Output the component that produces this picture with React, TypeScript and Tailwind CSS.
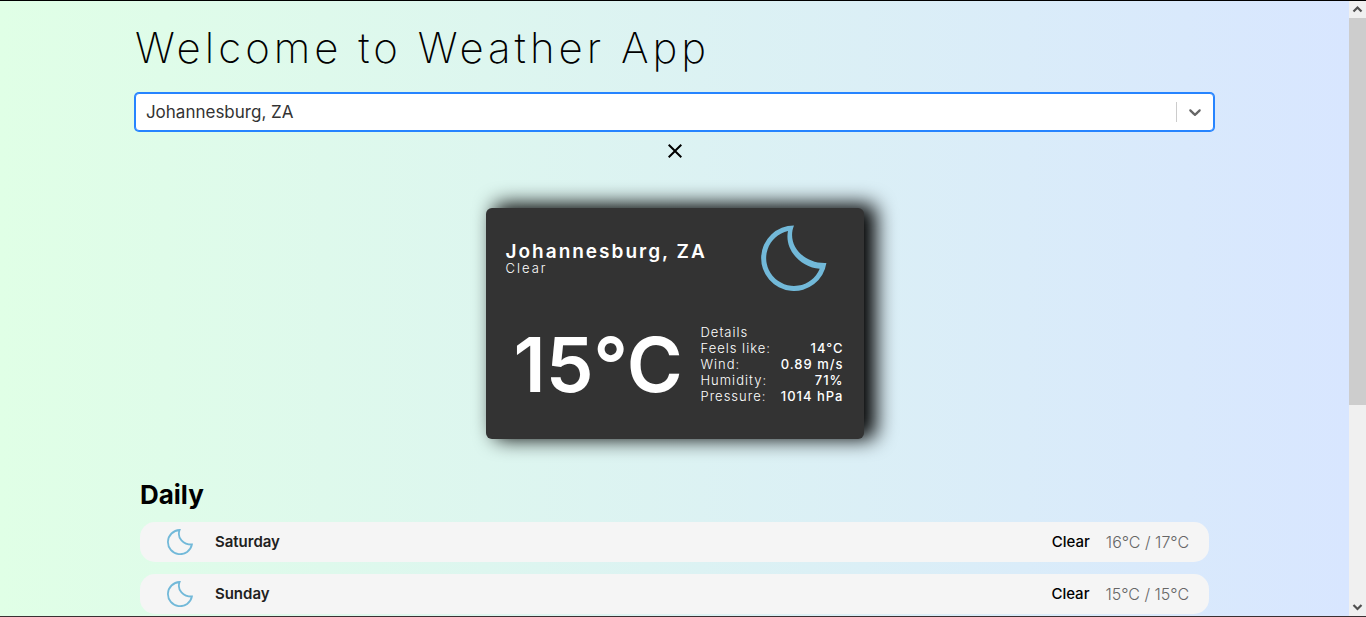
import { useState } from "react";
import { MdClose } from "react-icons/md";

const city = "Johannesburg, ZA";

const details = [
  { label: "Feels like:", value: "14°C" },
  { label: "Wind:", value: "0.89 m/s" },
  { label: "Humidity:", value: "71%" },
  { label: "Pressure:", value: "1014 hPa" },
];

const days = [
  { name: "Saturday", sky: "Clear", range: "16°C / 17°C" },
  { name: "Sunday", sky: "Clear", range: "15°C / 15°C" },
];

function MoonLarge() {
  return (
    <svg viewBox="0 0 66 66" className="size-[66px]" role="img" aria-label="Clear night">
      <path
        fill="#72b9d9"
        fillRule="evenodd"
        d="M33 .4A32.8 32.8 0 1 0 65.4 38C43 39 25 20 33 .4ZM27 6A27.8 27.8 0 1 0 58.7 43.7C40.5 43 23 25 27 6Z"
      />
    </svg>
  );
}

function MoonSmall() {
  return (
    <svg viewBox="0 0 26 26" className="size-[26px]" aria-hidden="true">
      <path
        fill="none"
        stroke="#72b9d9"
        strokeWidth="1.8"
        d="M12.6 1A12.1 12.1 0 1 0 24.9 15.5C16.5 15.6 9.6 9 12.6 1Z"
      />
    </svg>
  );
}

function CityPicker() {
  const [value, setValue] = useState(city);
  return (
    <div className="grid h-[38px] items-center rounded-sm border border-[#2684ff] bg-white ring-1 ring-[#2684ff]">
      <select
        aria-label="City"
        value={value}
        onChange={(e) => setValue(e.target.value)}
        className="col-start-1 row-start-1 h-full w-full appearance-none bg-transparent px-[10px] pt-[2px] text-[17px] text-[#333333] outline-none"
      >
        <option>{city}</option>
      </select>
      <div className="pointer-events-none col-start-1 row-start-1 flex items-center justify-self-end">
        <span className="h-5 w-px bg-[#cccccc]" />
        <svg viewBox="0 0 20 20" className="mx-2 size-5" fill="#666666" aria-hidden="true">
          <path d="M4.516 7.548c0.436-0.446 1.043-0.481 1.576 0l3.908 3.747 3.908-3.747c0.533-0.481 1.141-0.446 1.574 0 0.436 0.445 0.408 1.197 0 1.615-0.406 0.418-4.695 4.502-4.695 4.502-0.217 0.223-0.502 0.335-0.787 0.335s-0.57-0.112-0.789-0.335c0 0-4.287-4.084-4.695-4.502s-0.436-1.17 0-1.615z" />
        </svg>
      </div>
    </div>
  );
}

function CurrentWeather() {
  return (
    <section className="mx-auto w-[378px] rounded-md bg-[#333333] px-5 pt-[17px] pb-[35px] text-white shadow-[10px_-2px_20px_2px_#000000]">
      <div className="flex items-center justify-between pr-[17px]">
        <div>
          <h2 className="text-[19px] leading-5 font-semibold tracking-[2px]">{city}</h2>
          <p className="text-[13px] leading-3 font-light tracking-[2px]">Clear</p>
        </div>
        <MoonLarge />
      </div>
      <div className="mt-[33px] flex items-center justify-between">
        <p className="pl-2 text-[76px] leading-[80px] font-semibold">15°C</p>
        <dl className="w-[143px] text-[13px] leading-4 tracking-[1px]">
          <div className="font-light">Details</div>
          {details.map((d) => (
            <div key={d.label} className="flex justify-between">
              <dt className="font-light">{d.label}</dt>
              <dd className="font-medium">{d.value}</dd>
            </div>
          ))}
        </dl>
      </div>
    </section>
  );
}

function Daily() {
  return (
    <section className="mx-[5px] mt-10">
      <h2 className="text-[26px] leading-8 font-bold">Daily</h2>
      <ul className="mt-[11px] flex flex-col gap-3">
        {days.map((d) => (
          <li key={d.name} className="flex h-10 items-center rounded-[15px] bg-[#f5f5f5] pr-5 pl-[27px] text-[15px]">
            <MoonSmall />
            <span className="ml-[22px] flex-1 font-semibold text-[#212121]">{d.name}</span>
            <span className="mr-4 font-medium text-black">{d.sky}</span>
            <span className="text-base font-light text-[#666666]">{d.range}</span>
          </li>
        ))}
      </ul>
    </section>
  );
}

function ScrollArrow({ down }: { down?: boolean }) {
  return (
    <svg viewBox="0 0 17 17" className="size-[17px] shrink-0" aria-hidden="true">
      <path
        d={down ? "M4.5 6 8.5 10 12.5 6" : "M4.5 10.5 8.5 6.5 12.5 10.5"}
        fill="none"
        stroke="#505050"
        strokeWidth="2.2"
      />
    </svg>
  );
}

export default function App() {
  return (
    <div className="flex h-screen overflow-hidden border-t border-b border-t-black border-b-[#3a3032] font-['Inter','Liberation_Sans',sans-serif]">
      <main className="flex-1 overflow-hidden bg-linear-to-r/srgb from-[#e0ffe6] to-[#d8e6ff]">
        <div className="mx-auto w-4/5 pt-5">
          <h1 className="text-[42px] leading-[54px] font-extralight tracking-[4px]">Welcome to Weather App</h1>
          <div className="mt-[18px]">
            <CityPicker />
          </div>
          <div className="mt-2 mb-[45px] flex justify-center">
            <button type="button" aria-label="Clear city">
              <MdClose className="size-6" />
            </button>
          </div>
          <CurrentWeather />
          <Daily />
        </div>
      </main>
      <div className="flex w-[17px] flex-col bg-[#f0f0f0]" aria-hidden="true">
        <ScrollArrow />
        <div className="h-[63%] w-full bg-[#cdcdcd]" />
        <div className="flex-1" />
        <ScrollArrow down />
      </div>
    </div>
  );
}
